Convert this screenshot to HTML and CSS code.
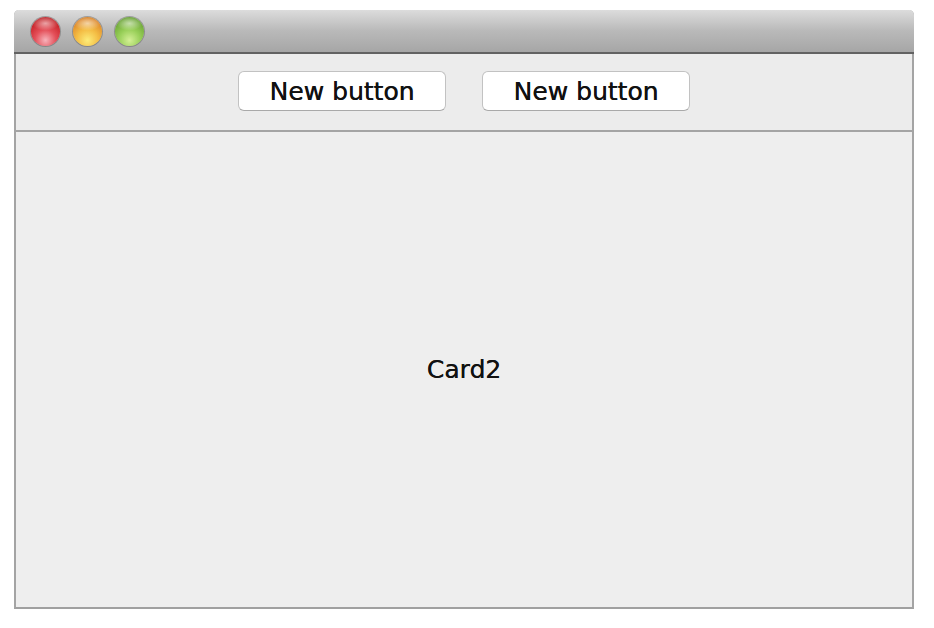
FILE: index.html
```html
<!DOCTYPE html>
<html>
<head>
<meta charset="utf-8">
<link rel="stylesheet" href="styles.css">
</head>
<body>
<div class="window">
  <div class="titlebar">
    <span class="light red"></span>
    <span class="light orange"></span>
    <span class="light green"></span>
  </div>
  <div class="toolbar">
    <button class="btn">New button</button>
    <button class="btn">New button</button>
  </div>
  <div class="content">
    <span class="card-label">Card2</span>
  </div>
</div>
</body>
</html>
```
FILE: styles.css
```css
html, body {
  margin: 0;
  padding: 0;
  background: #ffffff;
}
body {
  font-family: "DejaVu Sans", "Liberation Sans", sans-serif;
}
.window {
  margin: 10px 0 0 14px;
  width: 896px;
  border-left: 2px solid #a4a4a4;
  border-right: 2px solid #a4a4a4;
  border-bottom: 2px solid #a0a0a0;
  border-radius: 5px 5px 0 0;
  box-sizing: content-box;
}
.titlebar {
  height: 42px;
  margin: 0 -2px;
  border-radius: 5px 5px 0 0;
  background: linear-gradient(#dcdcdc, #b9b9b9 50%, #a6a6a6);
  border-bottom: 2px solid #626262;
  display: flex;
  align-items: center;
  gap: 13px;
  padding-left: 17px;
}
.light {
  width: 29px;
  height: 29px;
  border-radius: 50%;
  box-shadow: 0 0 0 1px rgba(80, 80, 80, 0.4);
}
.red {
  background: radial-gradient(ellipse 45% 25% at 50% 22%, rgba(255,255,255,0.55), rgba(255,255,255,0) 100%),
    radial-gradient(circle at 50% 80%, #f7b3bb 0%, #e4505a 38%, #cc2a30 68%, #a51e22 100%);
}
.orange {
  background: radial-gradient(ellipse 45% 25% at 50% 22%, rgba(255,255,255,0.55), rgba(255,255,255,0) 100%),
    radial-gradient(circle at 50% 80%, #fcec7a 0%, #f4bd44 40%, #de8a2c 75%, #b96a1c 100%);
}
.green {
  background: radial-gradient(ellipse 45% 25% at 50% 22%, rgba(255,255,255,0.55), rgba(255,255,255,0) 100%),
    radial-gradient(circle at 50% 80%, #d4ef96 0%, #98cf58 40%, #6ea738 75%, #4f8a26 100%);
}
.toolbar {
  height: 78px;
  background: #ececec;
  border-bottom: 2px solid #a4a4a4;
  display: flex;
  justify-content: center;
  align-items: center;
  gap: 36px;
  box-sizing: border-box;
  padding-bottom: 2px;
}
.btn {
  width: 208px;
  height: 40px;
  background: #ffffff;
  border: 1px solid #c2c2c2;
  border-bottom-color: #a9a9a9;
  border-radius: 6px;
  font-family: "DejaVu Sans", "Liberation Sans", sans-serif;
  font-size: 25px;
  color: #111111;
  padding: 0;
  text-shadow: 0.3px 0 0 #111111;
}
.content {
  height: 475px;
  background: #eeeeee;
  display: flex;
  align-items: center;
  justify-content: center;
}
.card-label {
  font-size: 25px;
  color: #111111;
  text-shadow: 0.3px 0 0 #111111;
}
```
